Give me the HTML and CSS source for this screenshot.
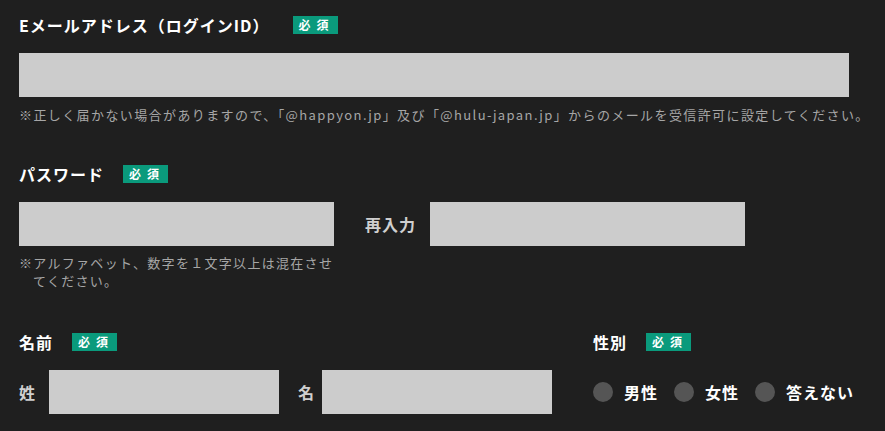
FILE: index.html
```html
<!DOCTYPE html>
<html lang="ja">
<head>
<meta charset="utf-8">
<title>会員登録</title>
<link rel="stylesheet" href="styles.css">
</head>
<body>
<main class="form">
  <section class="field field-email">
    <div class="field-head field-head-email">
      <span class="field-label">Eメールアドレス（ログインID）</span>
      <span class="badge">必須</span>
    </div>
    <input class="input input-wide" type="text">
    <p class="note">※正しく届かない場合がありますので、「@happyon.jp」及び「@hulu-japan.jp」からのメールを受信許可に設定してください。</p>
  </section>

  <section class="field field-password">
    <div class="field-head">
      <span class="field-label">パスワード</span>
      <span class="badge">必須</span>
    </div>
    <div class="pw-row">
      <div class="pw-col">
        <input class="input input-pw" type="password">
        <p class="note note-hang">※アルファベット、数字を１文字以上は混在させてください。</p>
      </div>
      <span class="sub-label reenter">再入力</span>
      <input class="input input-pw" type="password">
    </div>
  </section>

  <section class="row-bottom">
    <div class="field field-name">
      <div class="field-head">
        <span class="field-label">名前</span>
        <span class="badge">必須</span>
      </div>
      <div class="name-row">
        <span class="sub-label name-sei">姓</span>
        <input class="input input-name" type="text">
        <span class="sub-label name-mei">名</span>
        <input class="input input-name" type="text">
      </div>
    </div>
    <div class="field field-gender">
      <div class="field-head">
        <span class="field-label">性別</span>
        <span class="badge">必須</span>
      </div>
      <div class="radios">
        <label class="radio"><span class="radio-dot"></span><span class="radio-text">男性</span></label>
        <label class="radio"><span class="radio-dot"></span><span class="radio-text">女性</span></label>
        <label class="radio"><span class="radio-dot"></span><span class="radio-text">答えない</span></label>
      </div>
    </div>
  </section>
</main>
</body>
</html>
```
FILE: styles.css
```css
* { box-sizing: border-box; }
html, body {
  margin: 0;
  padding: 0;
  background: #1f1f1f;
}
body {
  font-family: "Noto Sans CJK JP", "Noto Sans", sans-serif;
  color: #ffffff;
  width: 885px;
  height: 431px;
  overflow: hidden;
}
.form {
  padding: 16px 19px 0;
}
.field-head {
  display: flex;
  align-items: center;
  height: 18px;
  gap: 19px;
}
.field-head-email {
  gap: 23px;
}
.field-label {
  font-size: 16px;
  font-weight: 700;
  letter-spacing: 1px;
  line-height: 18px;
  color: #ffffff;
  white-space: nowrap;
}
.badge {
  display: inline-block;
  flex: 0 0 45px;
  width: 45px;
  height: 18px;
  padding-left: 6px;
  background: #0a9a7c;
  color: #ffffff;
  font-size: 12px;
  font-weight: 700;
  letter-spacing: 6px;
  line-height: 18px;
}
.input {
  display: block;
  flex: 0 0 auto;
  height: 44px;
  margin: 0;
  padding: 0 10px;
  border: none;
  border-radius: 0;
  outline: none;
  background: #cccccc;
  font-family: inherit;
  font-size: 16px;
}
.input-wide {
  width: 830px;
  margin-top: 19px;
}
.note {
  margin: 9px 0 0;
  font-size: 13px;
  line-height: 18px;
  letter-spacing: 1.4px;
  color: #a6a6a6;
  white-space: nowrap;
}
.field-password {
  margin-top: 41px;
}
.pw-row {
  display: flex;
  align-items: flex-start;
  margin-top: 19px;
}
.pw-col {
  flex: 0 0 315px;
  width: 315px;
}
.input-pw {
  width: 315px;
}
.note-hang {
  margin-top: 8px;
  width: 323px;
  white-space: normal;
  letter-spacing: 1.3px;
  padding-left: 14px;
  text-indent: -14px;
}
.sub-label {
  font-size: 16px;
  font-weight: 700;
  letter-spacing: 1px;
  color: #cfcfcf;
  line-height: 44px;
  white-space: nowrap;
}
.reenter {
  margin-left: 31px;
  margin-right: 14px;
}
.row-bottom {
  display: flex;
  gap: 41px;
  margin-top: 43px;
}
.field-name {
  flex: 0 0 533px;
  width: 533px;
}
.field-gender {
  flex: 1 0 auto;
}
.name-row {
  display: flex;
  align-items: center;
  margin-top: 19px;
}
.name-sei {
  margin-right: 13px;
}
.name-mei {
  margin-left: 19px;
  margin-right: 7px;
}
.input-name {
  width: 230px;
}
.radios {
  display: flex;
  align-items: center;
  height: 44px;
  margin-top: 19px;
}
.radio {
  display: flex;
  align-items: center;
  flex: 0 0 auto;
  margin-right: 16px;
}
.radio-dot {
  flex: 0 0 20px;
  width: 20px;
  height: 20px;
  border-radius: 50%;
  background: #555555;
  margin-right: 11px;
}
.radio-text {
  font-size: 16px;
  font-weight: 700;
  letter-spacing: 1px;
  color: #ffffff;
  white-space: nowrap;
}
```
